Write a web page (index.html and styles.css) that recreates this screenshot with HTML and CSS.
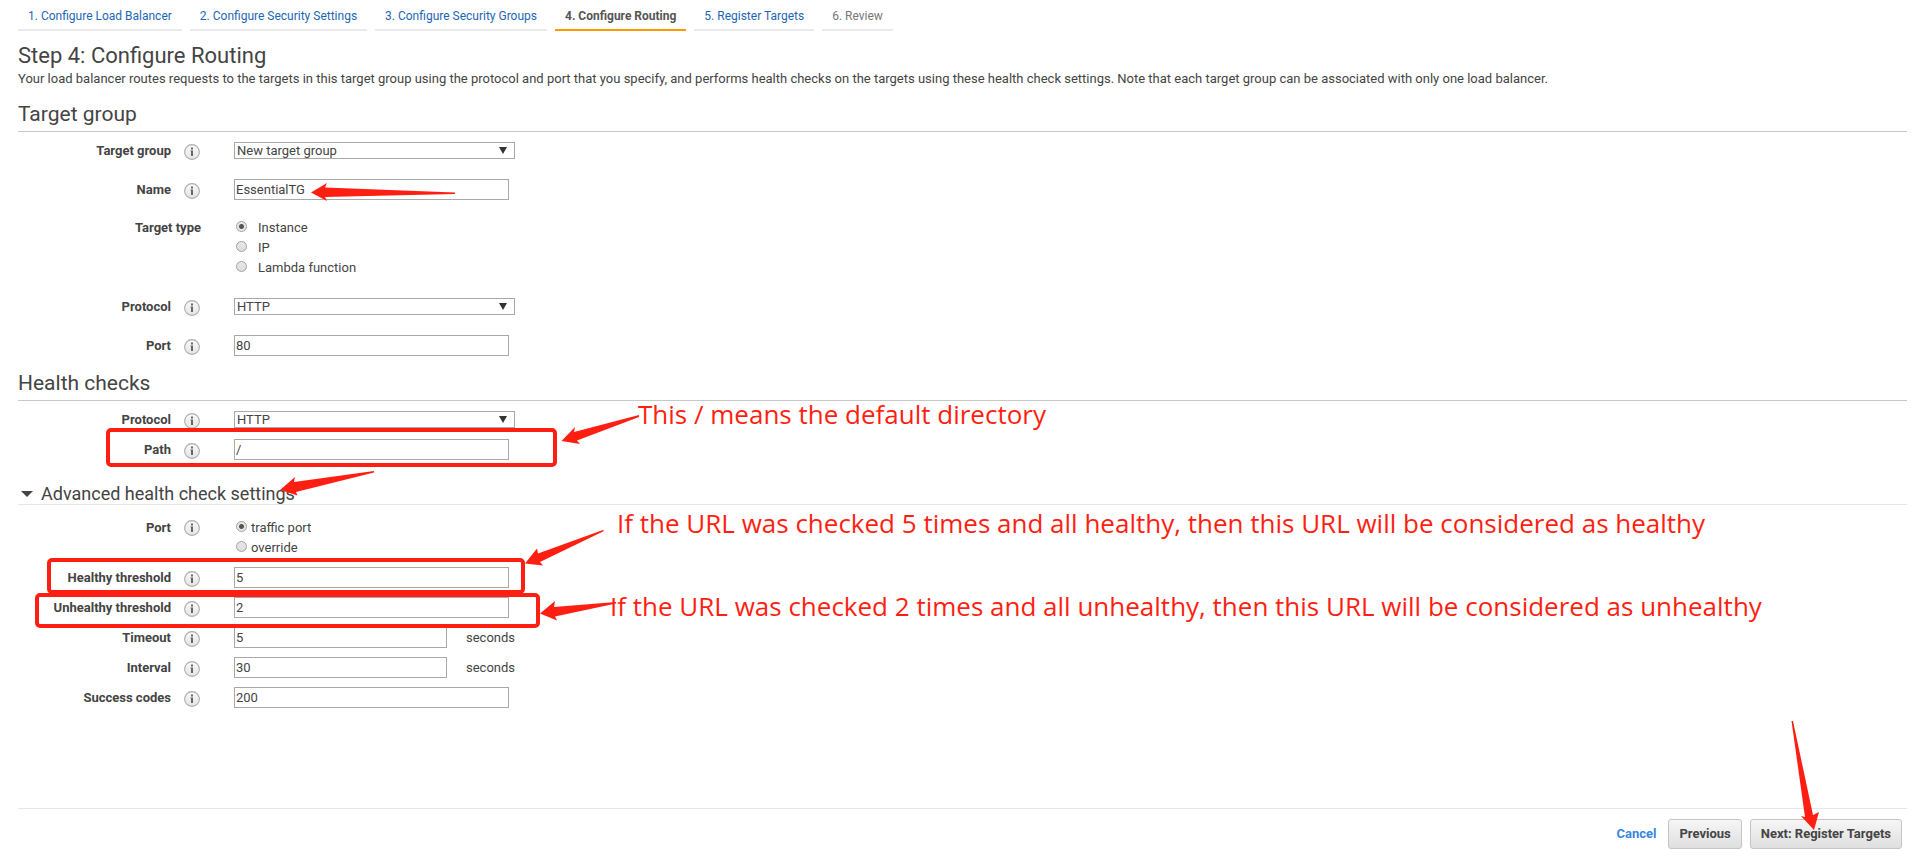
FILE: index.html
```html
<!DOCTYPE html>
<html lang="en">
<head>
<meta charset="utf-8">
<title>Configure Routing</title>
<link rel="stylesheet" href="styles.css">
</head>
<body>
<svg class="defs" aria-hidden="true">
  <defs>
    <linearGradient id="info-fill" x1="0" y1="0" x2="0" y2="1"><stop offset="0" stop-color="#fafafa"/><stop offset="1" stop-color="#e4e4e4"/></linearGradient>
    <symbol id="info" viewBox="0 0 16 16"><circle cx="8" cy="8" r="7.4" fill="url(#info-fill)" stroke="#adadad" stroke-width="1.1"/><path d="M7 3.5h2v2H7zM6.5 6.5H9V12H7V7.5h-.5z" fill="#666"/></symbol>
  </defs>
</svg>
<div class="page">
  <nav class="steps">
    <a class="step" href="#">1. Configure Load Balancer</a>
    <a class="step" href="#">2. Configure Security Settings</a>
    <a class="step" href="#">3. Configure Security Groups</a>
    <a class="step step-current" href="#" aria-current="step">4. Configure Routing</a>
    <a class="step" href="#">5. Register Targets</a>
    <span class="step step-off">6. Review</span>
  </nav>
  <form class="wizard">
    <h1 class="title">Step 4: Configure Routing</h1>
    <p class="intro">Your load balancer routes requests to the targets in this target group using the protocol and port that you specify, and performs health checks on the targets using these health check settings. Note that each target group can be associated with only one load balancer.</p>

    <section class="group">
      <h2 class="heading">Target group</h2>
      <div class="rows rows-wide">
        <div class="row"><label class="label" for="tg">Target group</label><svg class="info"><use href="#info"/></svg>
          <span class="pick"><select class="select" id="tg"><option>New target group</option></select></span></div>
        <div class="row"><label class="label" for="name">Name</label><svg class="info"><use href="#info"/></svg>
          <input class="text" id="name" type="text" value="EssentialTG"></div>
        <div class="row row-top"><span class="label label-long" id="type">Target type</span>
          <div class="radios radios-loose" role="radiogroup" aria-labelledby="type">
            <label class="option"><input class="radio" type="radio" name="type" checked>Instance</label>
            <label class="option"><input class="radio" type="radio" name="type">IP</label>
            <label class="option"><input class="radio" type="radio" name="type">Lambda function</label>
          </div></div>
        <div class="row"><label class="label" for="proto">Protocol</label><svg class="info"><use href="#info"/></svg>
          <span class="pick"><select class="select" id="proto"><option>HTTP</option></select></span></div>
        <div class="row"><label class="label" for="port">Port</label><svg class="info"><use href="#info"/></svg>
          <input class="text" id="port" type="text" value="80"></div>
      </div>
    </section>

    <section class="group">
      <h2 class="heading">Health checks</h2>
      <div class="rows">
        <div class="row"><label class="label" for="hproto">Protocol</label><svg class="info"><use href="#info"/></svg>
          <span class="pick"><select class="select" id="hproto"><option>HTTP</option></select></span></div>
        <div class="row"><label class="label" for="path">Path</label><svg class="info"><use href="#info"/></svg>
          <input class="text" id="path" type="text" value="/"></div>
      </div>
    </section>

    <section class="group">
      <h3 class="subheading"><svg class="caret" viewBox="0 0 12 6"><path d="M0 0h12L6 6z" fill="#444"/></svg>Advanced health check settings</h3>
      <div class="rows rows-advanced">
        <div class="row row-top"><span class="label" id="hport">Port</span><svg class="info"><use href="#info"/></svg>
          <div class="radios" role="radiogroup" aria-labelledby="hport">
            <label class="option"><input class="radio" type="radio" name="hport" checked>traffic port</label>
            <label class="option"><input class="radio" type="radio" name="hport">override</label>
          </div></div>
        <div class="row"><label class="label" for="healthy">Healthy threshold</label><svg class="info"><use href="#info"/></svg>
          <input class="text" id="healthy" type="text" value="5"></div>
        <div class="row"><label class="label" for="unhealthy">Unhealthy threshold</label><svg class="info"><use href="#info"/></svg>
          <input class="text" id="unhealthy" type="text" value="2"></div>
        <div class="row"><label class="label" for="timeout">Timeout</label><svg class="info"><use href="#info"/></svg>
          <input class="text text-short" id="timeout" type="text" value="5"><span class="unit">seconds</span></div>
        <div class="row"><label class="label" for="interval">Interval</label><svg class="info"><use href="#info"/></svg>
          <input class="text text-short" id="interval" type="text" value="30"><span class="unit">seconds</span></div>
        <div class="row"><label class="label" for="codes">Success codes</label><svg class="info"><use href="#info"/></svg>
          <input class="text" id="codes" type="text" value="200"></div>
      </div>
    </section>

    <footer class="actions">
      <a class="cancel" href="#">Cancel</a>
      <button class="button" type="button">Previous</button>
      <button class="button" type="button">Next: Register Targets
        <svg class="next-arrow" viewBox="0 0 38 110"><path d="M8.500 0H10L30 94 36 91 31 109 18 95 22 96Z" fill="#ff1f12"/></svg>
      </button>
    </footer>
  </form>

  <svg class="marks" aria-hidden="true">
    <g fill="none" stroke="#ff1f12" stroke-width="4">
      <rect x="108" y="430" width="447" height="35" rx="3"/>
      <rect x="49" y="560" width="474" height="32" rx="3"/>
      <rect x="37" y="595" width="501" height="31" rx="3"/>
    </g>
    <g fill="#ff1f12">
      <path d="M311 192.500 327 183 325 187.500 455 192.500V194L325 197 327 201Z"/>
      <path d="M561.500 441 575 427 574 432 639 415V417L577 440.500 580 444Z"/>
      <path d="M280 490 295 477 294 482 374 471V472.500L296 492 297.500 495.500Z"/>
      <path d="M525 563.500 537 548.500 538 553.500 603 530 604 531 540 562 543 565.500Z"/>
      <path d="M540 613.500 555 601 554 607 616 602V603.500L555 616.500 557 620.500Z"/>
    </g>
  </svg>
  <p class="note note-path">This / means the default directory</p>
  <p class="note note-healthy">If the URL was checked 5 times and all healthy, then this URL will be considered as healthy</p>
  <p class="note note-unhealthy">If the URL was checked 2 times and all unhealthy, then this URL will be considered as unhealthy</p>
</div>
</body>
</html>
```

FILE: styles.css
```css
* { box-sizing: border-box; }
body { margin: 0; background: #fff; color: #444; font: 13px/20px Roboto, "Liberation Sans", sans-serif; }
h1, h2, h3, p { margin: 0; font-weight: 400; }
input, select, button { font: inherit; color: inherit; margin: 0; }
.defs { position: absolute; width: 0; height: 0; }
.page { position: relative; min-height: 100vh; padding: 0 13px 0 18px; display: flex; flex-direction: column; }

.steps { display: flex; gap: 8px; font-size: 12px; line-height: 16px; padding-top: 8px; }
.step { padding: 0 10px 5px; border-bottom: 2px solid #eaeaea; color: #1e66b4; text-decoration: none; }
.step-current { border-color: #ff9900; color: #555; font-weight: 700; }
.step-off { color: #777; }

.wizard { flex: 1; display: flex; flex-direction: column; }
.title { font-size: 22px; line-height: 28px; margin-top: 11px; }
.intro { line-height: 17px; }
.heading { font-size: 21px; line-height: 28px; padding-bottom: 3px; border-bottom: 1px solid #c8c8c8; margin-top: 13px; }
.subheading { display: flex; align-items: center; gap: 8px; font-size: 18px; line-height: 20px; padding-left: 3px; border-bottom: 1px solid #e6e6e6; margin-top: 24px; }
.caret { width: 12px; height: 6px; }

.rows { display: flex; flex-direction: column; gap: 9px; padding-top: 8px; }
.rows-wide { gap: 18px; }
.rows-advanced { padding-top: 13px; }
.row { display: flex; align-items: center; min-height: 21px; }
.row-top { align-items: flex-start; }
.label { width: 153px; text-align: right; font-weight: 700; }
.label-long { width: 183px; margin-right: 33px; }
.info { width: 16px; height: 16px; margin: 2px 34px 0 13px; }
.text { width: 275px; height: 21px; padding: 0 1px; border: 1px solid #a9a9a9; border-radius: 0; background: #fff; }
.text-short { width: 213px; }
.unit { margin-left: 19px; }
.pick { position: relative; display: flex; }
.pick::after { content: ""; position: absolute; right: 8px; top: 5px; border: solid transparent; border-width: 7px 4px 0; border-top-color: #333; }
.select { appearance: none; width: 281px; height: 17px; padding: 0 2px; border: 1px solid #a9a9a9; border-radius: 0; background: #fff; line-height: 15px; }
.option { display: flex; gap: 4px; }
.radios-loose .option { gap: 11px; }
.radio { appearance: none; width: 11px; height: 11px; margin: 3px 0 0 2px; border: 1px solid #a0a0a0; border-radius: 50%; background: linear-gradient(#e8e8e8, #dcdcdc); }
.radio:checked { background: radial-gradient(circle, #555 0 2px, #e8e8e8 3px); }

.actions { display: flex; align-items: center; justify-content: flex-end; gap: 8px; margin-top: auto; padding: 10px 5px 18px 0; border-top: 1px solid #e6e6e6; font-weight: 700; }
.cancel { color: #3b86de; text-decoration: none; margin-right: 4px; }
.button { position: relative; height: 30px; padding: 0 10px; border: 1px solid #c4c4c4; border-radius: 3px; background: linear-gradient(#f6f6f6, #dfdfdf); font-weight: 700; }
.next-arrow { position: absolute; left: 32px; bottom: 17px; width: 38px; height: 110px; }

.marks { position: absolute; left: 0; top: 0; width: 100%; height: 100%; pointer-events: none; }
.note { position: absolute; color: #ff1f12; font: 26px/34px "Open Sans", "Noto Sans", sans-serif; white-space: nowrap; }
.note-path { left: 638px; top: 397px; }
.note-healthy { left: 617px; top: 506px; }
.note-unhealthy { left: 610px; top: 589px; }
```
